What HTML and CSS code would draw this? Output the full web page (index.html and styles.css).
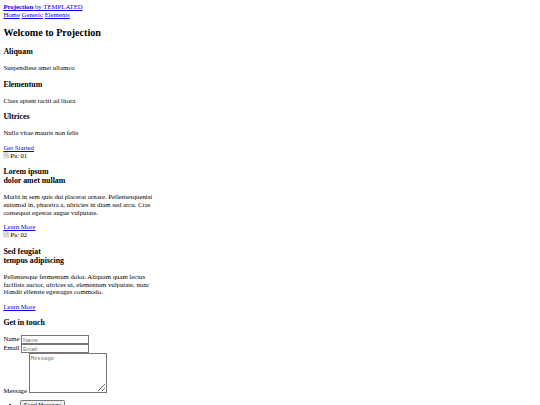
FILE: index.html
```html
<!DOCTYPE html>
<html lang="en" class="scaled">
<head>
<meta charset="utf-8">
<title>Projection by TEMPLATED</title>
<link rel="stylesheet" href="styles.css">
</head>
<body class="page">
<header class="site-header">
  <a href="#" class="logo"><strong>Projection</strong> by TEMPLATED</a>
  <nav class="nav"><a href="#">Home</a> <a href="#">Generic</a> <a href="#">Elements</a></nav>
</header>

<section class="banner">
  <header><h1 class="banner-title">Welcome to Projection</h1></header>
  <div class="features">
    <div class="feature"><h3>Aliquam</h3><p>Suspendisse amet ullamco</p></div>
    <div class="feature"><h3>Elementum</h3><p>Class aptent taciti ad litora</p></div>
    <div class="feature"><h3>Ultrices</h3><p>Nulla vitae mauris non felis</p></div>
  </div>
  <footer><a href="#" class="button">Get Started</a></footer>
</section>

<section class="spotlights">
  <article class="spotlight">
    <div class="image"><span class="broken"><svg class="broken-icon" viewBox="0 0 16 16" width="16" height="16"><path d="M1.5 1.5h9l3 3v4l-2 1.5-2-1.5-2 1.5-2-1.5-2 1.5-2-1.5z" fill="#f4f4f4" stroke="#9a9a9a"/><path d="M1.5 11.5l2-1.5 2 1.5 2-1.5 2 1.5 2-1.5 2 1.5v3h-12z" fill="#f4f4f4" stroke="#9a9a9a"/><path d="M3 8l2.5-3 2.5 2.5 1.5-1.5 2.5 2.5" fill="none" stroke="#5aa04c" stroke-width="1.2"/><circle cx="10" cy="4" r="1" fill="#4d8fd6"/></svg>Pic 01</span></div>
    <div class="content">
      <header><h3>Lorem ipsum<br>dolor amet nullam</h3></header>
      <p>Morbi in sem quis dui placerat ornare. Pellentesquenisi euismod in, pharetra a, ultricies in diam sed arcu. Cras consequat egestas augue vulputate.</p>
    </div>
    <footer><a href="#" class="button">Learn More</a></footer>
  </article>
  <article class="spotlight">
    <div class="image"><span class="broken"><svg class="broken-icon" viewBox="0 0 16 16" width="16" height="16"><path d="M1.5 1.5h9l3 3v4l-2 1.5-2-1.5-2 1.5-2-1.5-2 1.5-2-1.5z" fill="#f4f4f4" stroke="#9a9a9a"/><path d="M1.5 11.5l2-1.5 2 1.5 2-1.5 2 1.5 2-1.5 2 1.5v3h-12z" fill="#f4f4f4" stroke="#9a9a9a"/><path d="M3 8l2.5-3 2.5 2.5 1.5-1.5 2.5 2.5" fill="none" stroke="#5aa04c" stroke-width="1.2"/><circle cx="10" cy="4" r="1" fill="#4d8fd6"/></svg>Pic 02</span></div>
    <div class="content">
      <header><h3>Sed feugiat<br>tempus adipiscing</h3></header>
      <p>Pellentesque fermentum dolor. Aliquam quam lectus facilisis auctor, ultrices ut, elementum vulputate, nunc blandit ellenste egestagus commodo.</p>
    </div>
    <footer><a href="#" class="button">Learn More</a></footer>
  </article>
</section>

<footer class="site-footer">
  <h3>Get in touch</h3>
  <form action="#" method="post" class="contact">
    <div class="field"><label for="name">Name</label> <input class="text-input" name="name" id="name" type="text" placeholder="Name"></div>
    <div class="field"><label for="email">Email</label> <input class="text-input" name="email" id="email" type="email" placeholder="Email"></div>
    <div class="field"><label for="message">Message</label> <textarea class="message-input" name="message" id="message" rows="6" placeholder="Message"></textarea></div>
    <ul class="actions"><li><input value="Send Message" class="button" type="submit"></li></ul>
  </form>
</footer>
</body>
</html>
```

FILE: styles.css
```css
.scaled {
  zoom: 0.421875;
}

.page {
  font-family: "Liberation Serif", "Times New Roman", serif;
  line-height: 1.15;
}

.banner-title {
  font-size: 1.5em;
  margin: 0.83em 0;
}

.content {
  max-width: 360px;
}

.broken {
  display: inline-block;
}

.broken-icon {
  vertical-align: -2px;
}

.text-input {
  width: 151px;
  font-family: "Liberation Sans", Arial, sans-serif;
}

.message-input {
  width: 177px;
  height: 87px;
}

.actions {
  margin-top: 12px;
}
```
